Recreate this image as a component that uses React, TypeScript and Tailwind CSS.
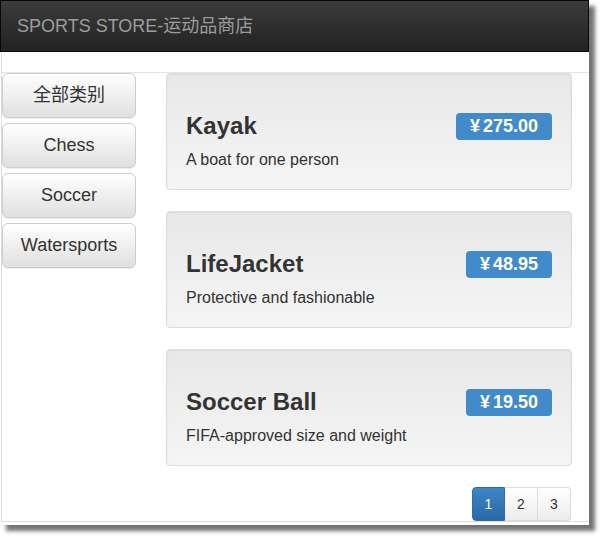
import React from "react";

const categories = ["全部类别", "Chess", "Soccer", "Watersports"];

const products = [
  { name: "Kayak", description: "A boat for one person", price: "275.00" },
  { name: "LifeJacket", description: "Protective and fashionable", price: "48.95" },
  { name: "Soccer Ball", description: "FIFA-approved size and weight", price: "19.50" },
];

const font = "font-['Liberation_Sans','Noto_Sans_CJK_SC',sans-serif]";

const App = () => {
  return (
    <div className={`w-[604px] h-[541px] bg-white overflow-hidden ${font}`}>
      <div className="w-[589px] h-[525px] bg-white shadow-[6px_6px_4px_rgba(0,0,0,0.55)] flex flex-col">
        <div className="h-[52px] shrink-0 flex items-center pl-[16px] border border-[#080808] bg-gradient-to-b from-[#3c3c3c] to-[#222222]">
          <span className="text-[18px] leading-[20px] text-[#9d9d9d]">SPORTS STORE-运动品商店</span>
        </div>
        <div className="h-[470px] ml-px border-l border-b border-[#dddddd] pt-5">
          <div className="border-t border-[#e5e5e5] flex">
            <div className="w-[134px] flex flex-col gap-[5px]">
              {categories.map((c) => (
                <button
                  key={c}
                  className="h-[45px] w-full rounded-[6px] border border-[#cccccc] bg-gradient-to-b from-white to-[#e0e0e0] text-[18px] text-[#333333] shadow-[inset_0_1px_0_rgba(255,255,255,0.15),0_1px_1px_rgba(0,0,0,0.075)]"
                >
                  {c}
                </button>
              ))}
            </div>
            <div className="ml-[30px] w-[406px] flex flex-col">
              {products.map((p) => (
                <div
                  key={p.name}
                  className="mb-[21px] h-[117px] rounded-[4px] border border-[#dcdcdc] bg-gradient-to-b from-[#e8e8e8] to-[#f5f5f5] px-[19px] pt-[39px] shadow-[inset_0_1px_3px_rgba(0,0,0,0.05)]"
                >
                  <div className="flex justify-between items-start h-[27px]">
                    <span className="text-[24px] leading-[26px] font-bold text-[#333333]">{p.name}</span>
                    <span className="h-[27px] px-[14px] flex items-center rounded-[4px] bg-[#428bca] text-white text-[18px] font-bold">
                      <span className="mr-[3px]">¥</span>
                      {p.price}
                    </span>
                  </div>
                  <p className="mt-[10px] text-[16px] leading-[20px] text-[#333333]">{p.description}</p>
                </div>
              ))}
              <div className="flex justify-end mr-px">
                <div className="flex h-[34px] text-[14px]">
                  <span className="w-[33px] flex items-center justify-center rounded-l-[4px] border border-[#2e6da4] bg-gradient-to-b from-[#3d86c6] to-[#2a69a4] text-white">
                    1
                  </span>
                  <span className="w-[33px] flex items-center justify-center border border-l-0 border-[#dddddd] bg-gradient-to-b from-white to-[#ececec] text-[#333333]">
                    2
                  </span>
                  <span className="w-[33px] flex items-center justify-center rounded-r-[4px] border border-l-0 border-[#dddddd] bg-gradient-to-b from-white to-[#ececec] text-[#333333]">
                    3
                  </span>
                </div>
              </div>
            </div>
          </div>
        </div>
      </div>
    </div>
  );
};

export default App;
